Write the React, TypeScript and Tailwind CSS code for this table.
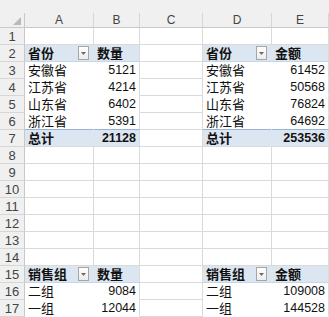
import React from "react";

const font = { fontFamily: '"Liberation Sans", "Noto Sans CJK SC", sans-serif' };

type CellData = { t?: string; num?: boolean; dd?: boolean };

const letters = ["A", "B", "C", "D", "E"];

// content of each sheet row, by column letter
const sheet: Record<number, Record<string, CellData>> = {
    2: { A: { t: "省份", dd: true }, B: { t: "数量" }, D: { t: "省份", dd: true }, E: { t: "金额" } },
    3: { A: { t: "安徽省" }, B: { t: "5121", num: true }, D: { t: "安徽省" }, E: { t: "61452", num: true } },
    4: { A: { t: "江苏省" }, B: { t: "4214", num: true }, D: { t: "江苏省" }, E: { t: "50568", num: true } },
    5: { A: { t: "山东省" }, B: { t: "6402", num: true }, D: { t: "山东省" }, E: { t: "76824", num: true } },
    6: { A: { t: "浙江省" }, B: { t: "5391", num: true }, D: { t: "浙江省" }, E: { t: "64692", num: true } },
    7: { A: { t: "总计" }, B: { t: "21128", num: true }, D: { t: "总计" }, E: { t: "253536", num: true } },
    15: { A: { t: "销售组", dd: true }, B: { t: "数量" }, D: { t: "销售组", dd: true }, E: { t: "金额" } },
    16: { A: { t: "二组" }, B: { t: "9084", num: true }, D: { t: "二组" }, E: { t: "109008", num: true } },
    17: { A: { t: "一组" }, B: { t: "12044", num: true }, D: { t: "一组" }, E: { t: "144528", num: true } },
};

function inPivot(r: number, c: string) {
    const rowOk = (r >= 2 && r <= 7) || (r >= 15 && r <= 17);
    return rowOk && c !== "C";
}

function Dropdown() {
    return (
        <span className="ml-auto mr-[1px] flex h-[14px] w-[11px] items-center justify-center border border-[#a6a6a6] bg-gradient-to-b from-white to-[#ececec]">
            <svg width="5" height="3" viewBox="0 0 5 3">
                <path d="M0 0h5L2.5 3z" fill="#6b6b6b" />
            </svg>
        </span>
    );
}

function Cell({ r, c }: { r: number; c: string }) {
    const d = sheet[r]?.[c];
    const pivot = inPivot(r, c);
    const head = r === 2 || r === 15;
    const total = r === 7;
    const leftCol = c === "A" || c === "D";

    let bg = "bg-white";
    if (pivot && (head || total)) bg = "bg-[#dce6f1]";

    let br = "border-r-[#dadada]";
    if (pivot && leftCol) br = "border-r-transparent";

    let bb = "border-b-[#dadada]";
    if (pivot) {
        if (head) bb = "border-b-[#c5d6ea]";
        else if (r === 6) bb = "border-b-[#95b3d7]";
        else if (r !== 7) bb = "border-b-transparent";
    }

    const bold = pivot && (head || total) ? "font-bold" : "";

    return (
        <div className={`flex h-[17px] items-center border-b border-r px-[3px] text-[#111] ${bg} ${br} ${bb}`}>
            {d?.t && (
                <span
                    className={`${d.num ? "ml-auto text-[12.5px]" : "text-[13px]"} ${bold} leading-none`}
                    style={font}
                >
                    {d.t}
                </span>
            )}
            {d?.dd && <Dropdown />}
        </div>
    );
}

export default function App() {
    const rows = Array.from({ length: 17 }, (_, i) => i + 1);

    return (
        <div className="w-[329px] h-[317px] overflow-hidden bg-white" style={font}>
            <div className="h-[13px] bg-[#f0f0f0]" />
            <div className="grid grid-cols-[25px_69px_46px_63px_69px_57px]">
                <div className="relative h-[15px] border-b border-r border-[#c8c8c8] bg-[#f0f0f0]">
                    <svg className="absolute bottom-[2px] right-[3px]" width="8" height="8" viewBox="0 0 8 8">
                        <path d="M8 0v8H0z" fill="#b9b9b9" />
                    </svg>
                </div>
                {letters.map((l) => (
                    <div
                        key={l}
                        className="flex h-[15px] items-center justify-center border-b border-r border-b-[#c8c8c8] border-r-[#d6d6d6] bg-[#f0f0f0] text-[12px] leading-none text-[#444]"
                    >
                        {l}
                    </div>
                ))}

                {rows.map((r) => (
                    <React.Fragment key={r}>
                        <div className="flex h-[17px] items-center justify-center border-b border-r border-b-[#d6d6d6] border-r-[#c8c8c8] bg-[#f0f0f0] text-[13px] leading-none text-[#444]">
                            {r}
                        </div>
                        {letters.map((c) => (
                            <Cell key={c} r={r} c={c} />
                        ))}
                    </React.Fragment>
                ))}
            </div>
        </div>
    );
}
